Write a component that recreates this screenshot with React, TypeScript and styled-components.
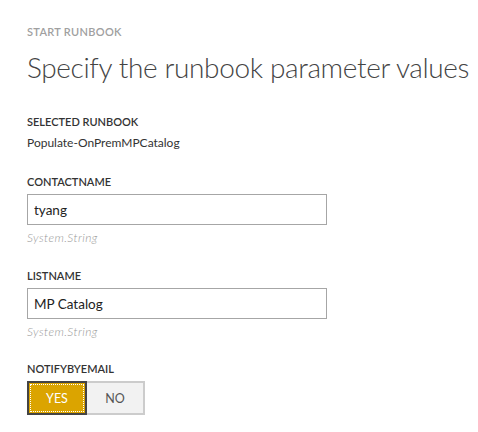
import React from "react";
import styled, { createGlobalStyle } from "styled-components";

const Global = createGlobalStyle`
  html, body { margin: 0; padding: 0; background: #ffffff; }
  body { font-family: Lato, "Open Sans", "Liberation Sans", sans-serif; color: #333333; }
  * { box-sizing: border-box; }
`;

const Page = styled.div`
  width: 478px;
  height: 432px;
  padding: 24px 0 0 27px;
  display: flex;
  flex-direction: column;
`;

const Eyebrow = styled.div`
  font-size: 11px;
  line-height: 15px;
  font-weight: 600;
  letter-spacing: 0.3px;
  color: #a0a0a0;
`;

const Title = styled.h1`
  margin: 8px 0 0 0;
  font-size: 28px;
  line-height: 40px;
  font-weight: 300;
  letter-spacing: -0.36px;
  color: #444444;
  white-space: nowrap;
`;

const Field = styled.div<{ $gap: number }>`
  display: flex;
  flex-direction: column;
  margin-top: ${(p) => p.$gap}px;
`;

const Label = styled.div`
  font-size: 11px;
  line-height: 15px;
  font-weight: 600;
  color: #333333;
`;

const Value = styled.div`
  margin-top: 6px;
  font-size: 12px;
  line-height: 16px;
  color: #333333;
`;

const TextBox = styled.input`
  margin-top: 5px;
  width: 300px;
  height: 31px;
  border: 1px solid #a6a6a6;
  padding: 0 6px;
  font-family: inherit;
  font-size: 13.5px;
  color: #222222;
  background: #ffffff;
  outline: none;
`;

const Hint = styled.div`
  margin-top: 5px;
  font-size: 12px;
  line-height: 15px;
  font-style: italic;
  font-weight: 300;
  letter-spacing: 0.4px;
  color: #9a9a9a;
`;

const Toggle = styled.div`
  margin-top: 5px;
  display: flex;
  width: 118px;
  height: 34px;
`;

const ToggleButton = styled.button<{ $active?: boolean }>`
  flex: 1;
  height: 100%;
  padding: 0;
  font-family: inherit;
  font-size: 12.5px;
  cursor: pointer;
  ${(p) =>
    p.$active
      ? `
    background: #dba400;
    color: #ffffff;
    border: 2px solid #444444;
    outline: 1px dotted #ffffff;
    outline-offset: -4px;
  `
      : `
    background: #f2f2f2;
    color: #555555;
    border: 2px solid #cccccc;
    border-left: none;
  `}
`;

export default function App() {
  return (
    <>
      <Global />
      <Page>
        <Eyebrow>START RUNBOOK</Eyebrow>
        <Title>Specify the runbook parameter values</Title>
        <Field $gap={27}>
          <Label>SELECTED RUNBOOK</Label>
          <Value>Populate-OnPremMPCatalog</Value>
        </Field>
        <Field $gap={23}>
          <Label>CONTACTNAME</Label>
          <TextBox defaultValue="tyang" readOnly />
          <Hint>System.String</Hint>
        </Field>
        <Field $gap={23}>
          <Label>LISTNAME</Label>
          <TextBox defaultValue="MP Catalog" readOnly />
          <Hint>System.String</Hint>
        </Field>
        <Field $gap={22}>
          <Label>NOTIFYBYEMAIL</Label>
          <Toggle>
            <ToggleButton $active>YES</ToggleButton>
            <ToggleButton>NO</ToggleButton>
          </Toggle>
        </Field>
      </Page>
    </>
  );
}
